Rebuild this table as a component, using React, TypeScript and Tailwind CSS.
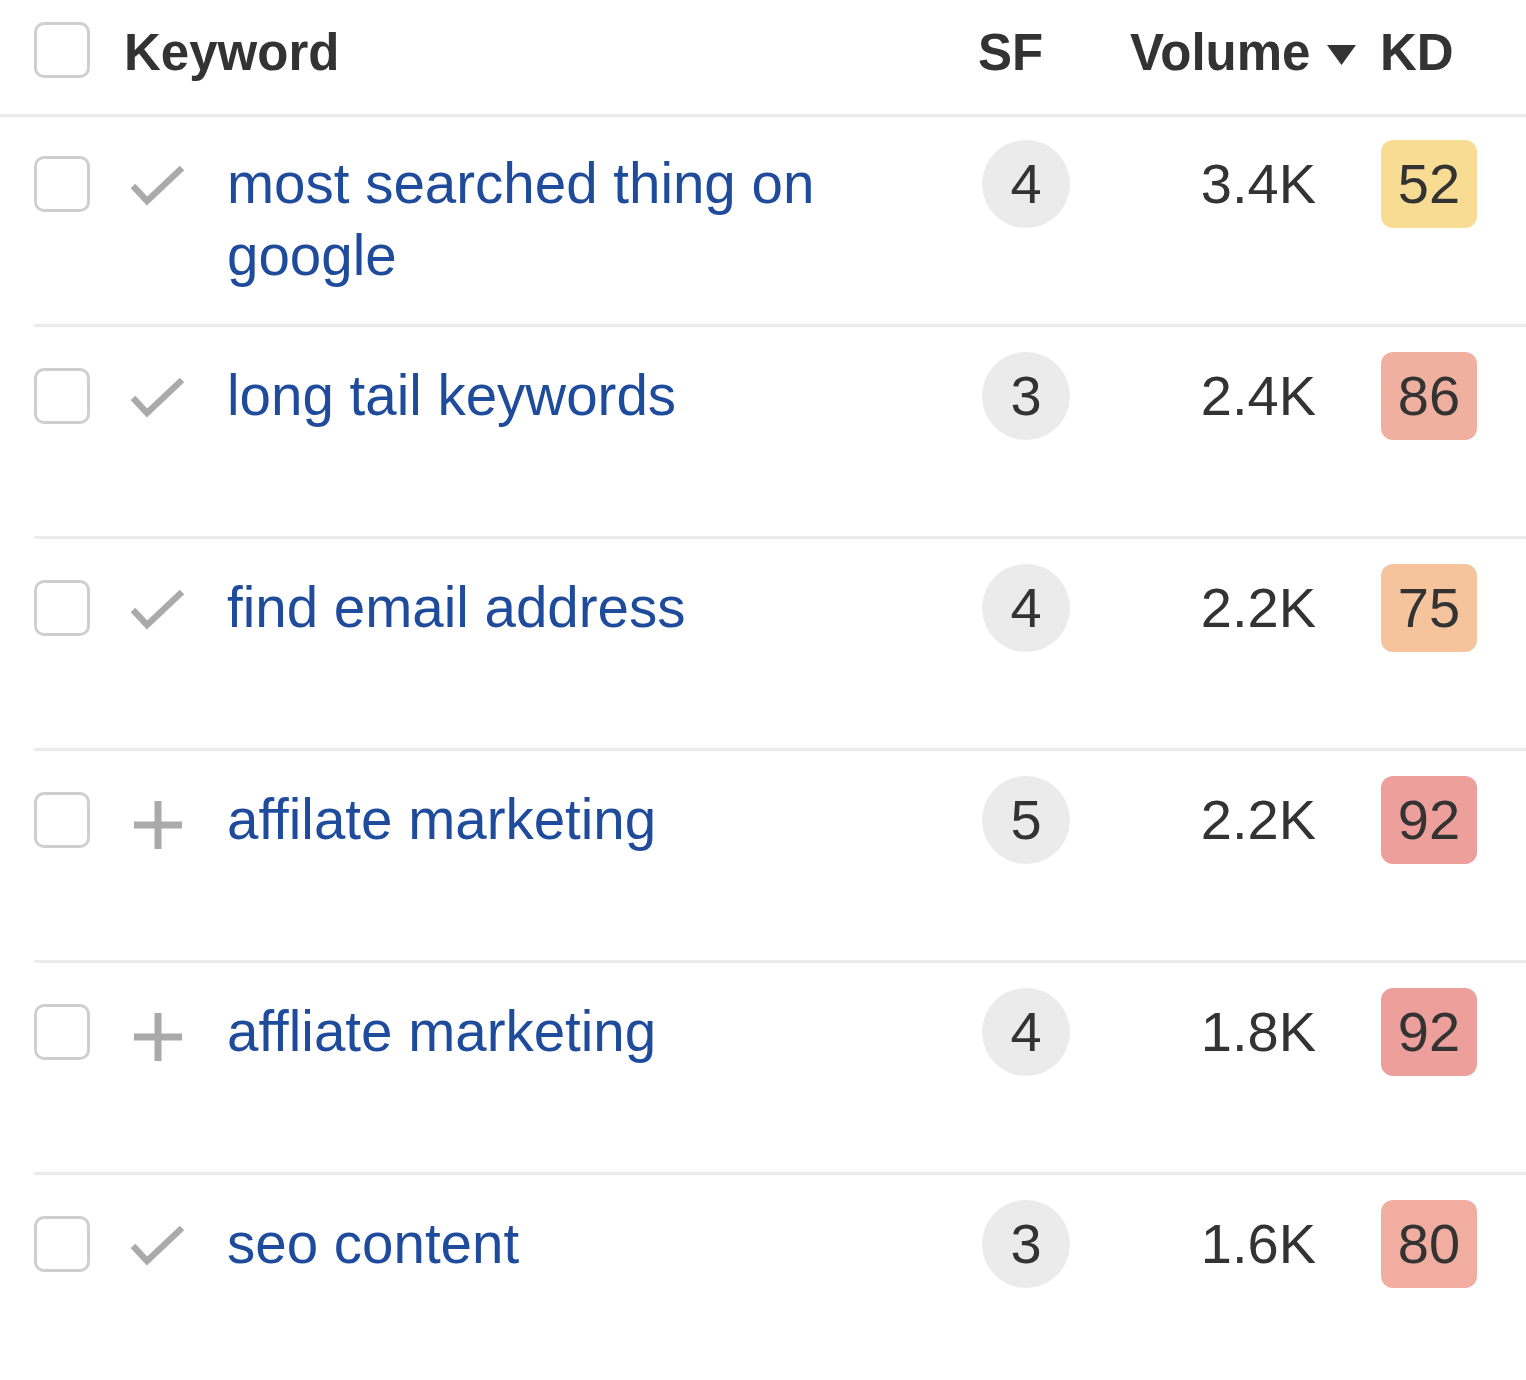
type Row = {
  keyword: string
  icon: 'check' | 'plus'
  sf: number
  volume: string
  kd: number
  kdColor: string
  box: string
}

const rows: Row[] = [
  { keyword: 'most searched thing on google', icon: 'check', sf: 4, volume: '3.4K', kd: 52, kdColor: 'bg-[#f8dc94]', box: 'h-[210px] pt-[23px]' },
  { keyword: 'long tail keywords', icon: 'check', sf: 3, volume: '2.4K', kd: 86, kdColor: 'bg-[#f0b0a0]', box: 'h-[212px] pt-[25px]' },
  { keyword: 'find email address', icon: 'check', sf: 4, volume: '2.2K', kd: 75, kdColor: 'bg-[#f5c39c]', box: 'h-[212px] pt-[25px]' },
  { keyword: 'affilate marketing', icon: 'plus', sf: 5, volume: '2.2K', kd: 92, kdColor: 'bg-[#eda09b]', box: 'h-[212px] pt-[25px]' },
  { keyword: 'affliate marketing', icon: 'plus', sf: 4, volume: '1.8K', kd: 92, kdColor: 'bg-[#eda09b]', box: 'h-[212px] pt-[25px]' },
  { keyword: 'seo content', icon: 'check', sf: 3, volume: '1.6K', kd: 80, kdColor: 'bg-[#f0ada0]', box: 'h-[212px] pt-[25px]' },
]

const Checkbox = ({ className = '' }: { className?: string }) => (
  <div
    className={`w-[56px] h-[56px] shrink-0 rounded-[10px] border-[3px] border-[#cfcfcf] bg-white ${className}`}
  />
)

const CheckIcon = () => (
  <svg width="54" height="42" viewBox="0 0 54 42" className="shrink-0">
    <polyline points="2,21 16,36 51,3" fill="none" stroke="#aaaaaa" strokeWidth="6.5" />
  </svg>
)

const PlusIcon = () => (
  <svg width="54" height="48" viewBox="0 0 54 48" className="shrink-0">
    <rect x="3" y="20.5" width="48" height="7" fill="#aaaaaa" />
    <rect x="23.5" y="0" width="7" height="48" fill="#aaaaaa" />
  </svg>
)

export default function App() {
  return (
    <div className="w-[1526px] min-h-[1380px] bg-white text-[#333333] font-['Liberation_Sans','Helvetica',sans-serif]">
      {/* header */}
      <div className="flex items-start h-[117px] pt-[22px] pl-[34px] border-b-[3px] border-[#ebebeb]">
        <Checkbox />
        <div className="ml-[34px] w-[854px] mt-[3px] text-[51px] leading-[56px] font-bold">Keyword</div>
        <div className="w-[152px] mt-[3px] text-[51px] leading-[56px] font-bold">SF</div>
        <div className="flex items-center w-[250px] mt-[3px] text-[51px] leading-[56px] font-bold">
          <span>Volume</span>
          <svg width="29" height="20" viewBox="0 0 29 20" className="ml-[17px] mt-[4px]">
            <polygon points="0,0 29,0 14.5,20" fill="#333333" />
          </svg>
        </div>
        <div className="mt-[3px] text-[51px] leading-[56px] font-bold">KD</div>
      </div>

      {/* rows */}
      <div className="ml-[34px]">
        {rows.map((row) => (
          <div
            key={row.keyword}
            className={`flex items-start ${row.box} border-b-[3px] border-[#ebebeb]`}
          >
            <Checkbox className="mt-[16px]" />
            <div className="ml-[41px] mt-[25px] w-[54px] flex justify-center">
              {row.icon === 'check' ? <CheckIcon /> : <PlusIcon />}
            </div>
            <div className="ml-[42px] w-[755px] pr-[60px] mt-[8px] text-[56.5px] leading-[72px] text-[#1e4b9c]">
              {row.keyword}
            </div>
            <div className="w-[88px] h-[88px] shrink-0 rounded-full bg-[#ebebeb] flex items-center justify-center text-[56px] leading-[72px]">
              {row.sf}
            </div>
            <div className="w-[246px] h-[88px] flex items-center justify-end text-[56px] leading-[72px]">
              {row.volume}
            </div>
            <div
              className={`ml-[65px] w-[96px] h-[88px] rounded-[12px] ${row.kdColor} flex items-center justify-center text-[56px] leading-[72px]`}
            >
              {row.kd}
            </div>
          </div>
        ))}
      </div>
    </div>
  )
}
